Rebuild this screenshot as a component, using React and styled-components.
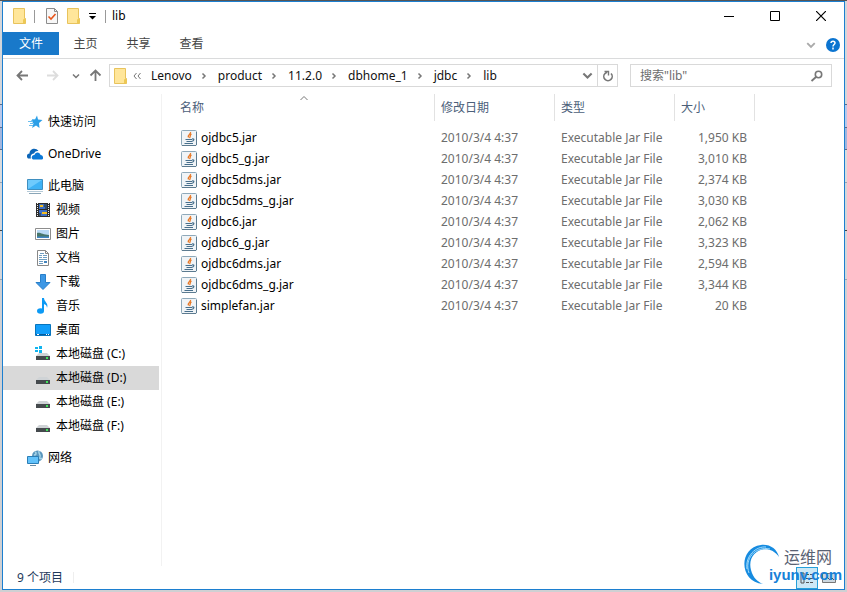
import React from 'react';
import styled, { createGlobalStyle, css } from 'styled-components';

const Global = createGlobalStyle`
  * { box-sizing: border-box; }
  body { margin: 0; }
  button, input { font: inherit; color: inherit; }
`;

const Desktop = styled.div`
  display: flex;
  min-height: 100vh;
  padding: 0 2px 2px;
  border-top: 1px solid #555;
  background: linear-gradient(#d4d6da 0 103px, #5c6b86 103px 104px, #b9c8ea 104px 126px, #5f6b86 126px 127px, #a2b6de 127px 148px, #5f6b86 148px 149px, #d9dbde 149px 181px, #9aa3b0 181px 182px, #d4d6da 182px 229px, #444 229px 230px, #d4d6da 230px 278px, #9aa3b0 278px 279px, #cfd0d3 279px);
  font-family: 'Noto Sans', 'Noto Sans CJK SC', sans-serif;
  font-size: 12px;
  line-height: 20px;
  color: #000;
`;

const Window = styled.main`
  position: relative;
  flex: 1;
  min-width: 0;
  display: flex;
  flex-direction: column;
  background: #fff;
  border: 1px solid #1c7fd0;
`;

const TitleBar = styled.header`
  display: flex;
  align-items: center;
  height: 30px;
  padding: 0 0 2px 9px;
`;

const IconButton = styled.button`
  display: flex;
  align-items: center;
  justify-content: center;
  flex: none;
  width: ${(p) => p.$w || 22}px;
  height: 22px;
  padding: 0;
  border: 0;
  background: none;
`;

const BarMark = styled.span`
  width: 1px;
  height: 13px;
  margin: 0 6px;
  background: #999;
`;

const Title = styled.h1`
  flex: 1;
  margin: 0;
  font-size: 12px;
  font-weight: 400;
`;

const WindowControls = styled.div`
  display: flex;
`;

const Ribbon = styled.nav`
  display: flex;
  align-items: flex-start;
  height: 27px;
  border-bottom: 1px solid #dadbdc;
`;

const RibbonTab = styled.button`
  width: ${(p) => (p.$primary ? 56 : 53)}px;
  height: 23px;
  padding: 1px 0 0;
  border: 0;
  background: ${(p) => (p.$primary ? '#1979ca' : 'none')};
  color: ${(p) => (p.$primary ? '#fff' : '#444')};
`;

const RibbonEnd = styled.div`
  display: flex;
  margin-left: auto;
  padding-top: 2px;
`;

const AddressRow = styled.div`
  display: flex;
  align-items: center;
  padding: 5px 12px 7px 7px;
`;

const AddressBar = styled.div`
  display: flex;
  align-items: center;
  flex: 1;
  min-width: 0;
  height: 23px;
  margin-right: 12px;
  padding-left: 3px;
  border: 1px solid #d9d9d9;
`;

const Crumbs = styled.ol`
  display: flex;
  align-items: center;
  flex: 1;
  margin: 0;
  padding: 0;
  list-style: none;
`;

const Crumb = styled.li`
  display: flex;
  align-items: center;
`;

const CrumbLink = styled.a`
  color: #111;
  text-decoration: none;
  padding: 0 5px 0 7px;
`;

const Refresh = styled(IconButton)`
  border-left: 1px solid #d9d9d9;
`;

const SearchBox = styled.label`
  display: flex;
  align-items: center;
  flex: none;
  width: 202px;
  height: 23px;
  padding: 0 5px 0 9px;
  border: 1px solid #d9d9d9;
`;

const SearchInput = styled.input`
  flex: 1;
  min-width: 0;
  padding: 0;
  border: 0;
  outline: 0;
  background: none;
  &::placeholder { color: #6d6d6d; opacity: 1; }
`;

const Content = styled.div`
  display: flex;
  flex: 1;
`;

const Sidebar = styled.nav`
  flex: none;
  width: 159px;
  padding: 16px 2px 0 0;
  border-right: 1px solid #f2f2f2;
`;

const TreeGroup = styled.ul`
  margin: 0 0 8px;
  padding: 0;
  list-style: none;
`;

const TreeLink = styled.a`
  display: flex;
  align-items: center;
  gap: 5px;
  height: 24px;
  padding-left: ${(p) => (p.$nested ? 32 : 24)}px;
  color: #000;
  text-decoration: none;
  background: ${(p) => (p.$selected ? '#d9d9d9' : 'none')};
`;

const Files = styled.section`
  flex: 1;
  min-width: 0;
`;

const FileTable = styled.table`
  width: 592px;
  table-layout: fixed;
  border-collapse: separate;
  border-spacing: 0;
`;

const Column = styled.col`
  width: ${(p) => p.$w}px;
`;

const HeadCell = styled.th`
  position: relative;
  height: 27px;
  padding: 0 0 0 ${(p) => (p.$first ? 18 : 6)}px;
  border-right: 1px solid #e2e2e2;
  color: #4c607a;
  font-weight: 400;
  text-align: left;
`;

const SortMark = styled.span`
  position: absolute;
  top: 0;
  left: 12px;
  right: 0;
  display: flex;
  justify-content: center;
`;

const SpacerCell = styled.td`
  height: 6px;
  padding: 0;
`;

const Cell = styled.td`
  height: 21px;
  padding: 0 8px 0 6px;
  color: #6d6d6d;
  white-space: nowrap;
  text-align: ${(p) => (p.$right ? 'right' : 'left')};
`;

const NameCell = styled(Cell)`
  padding-left: 19px;
  color: #000;
`;

const FileName = styled.span`
  display: flex;
  align-items: center;
  gap: 4px;
`;

const StatusBar = styled.footer`
  display: flex;
  align-items: center;
  height: 23px;
  padding-left: 14px;
  color: #1e395b;
`;

const StatusMark = styled.span`
  width: 1px;
  height: 11px;
  margin-left: 10px;
  background: #eee;
`;

const ViewButtons = styled.div`
  display: flex;
  margin-left: auto;
  padding-right: 4px;
`;

const ViewButton = styled(IconButton)`
  ${(p) => p.$active && css`
    border: 1px solid #26a0da;
    background: #cce8f6;
  `}
`;

const Watermark = styled.div`
  position: absolute;
  right: 2px;
  bottom: 3px;
  display: flex;
  pointer-events: none;
`;

const WatermarkText = styled.div`
  display: flex;
  flex-direction: column;
  align-items: flex-end;
  margin-left: -14px;
  padding-top: 4px;
`;

const WatermarkName = styled.span`
  padding-right: 10px;
  color: #596273;
  font-size: 16px;
  line-height: 19px;
`;

const WatermarkUrl = styled.strong`
  color: #1681d8;
  font: 700 15px/16px 'Liberation Sans', sans-serif;
`;

const Svg = ({ w = 16, h = 16, children }) => (
  <svg width={w} height={h} viewBox={`0 0 ${w} ${h}`} fill="none" aria-hidden="true">{children}</svg>
);

const Folder = () => (
  <Svg>
    <path d="M1.500 .5H12.500V10.500H13.500V15.500H1.500Z" fill="#ffe69a" stroke="#e8c35c" />
    <path d="M11 15V11.500L13.500 10.500V15.500Z" fill="#edc954" />
  </Svg>
);
const Check = () => (
  <Svg>
    <path d="M2.500 .5H10.500L13.500 3.500V15.500H2.500Z" fill="#f7f7f7" stroke="#8c8c8c" />
    <path d="M10.500 .5V3.500H13.500" stroke="#8c8c8c" />
    <path d="M4.500 8.500L7 11L11.500 6" stroke="#e8561c" strokeWidth="1.6" />
  </Svg>
);
const Chevron = ({ dir = 'down', color = '#777', size = 8, weight = 1.5 }) => {
  const d = { down: 'M1 2.500L4 5.500L7 2.500', right: 'M2.500 1.500L5 4L2.500 6.500', up: 'M0.500 6L4 2.500L7.500 6' }[dir];
  return <svg width={size} height={size} viewBox="0 0 8 8" fill="none" aria-hidden="true"><path d={d} stroke={color} strokeWidth={weight} /></svg>;
};
const Arrow = ({ dir, color = '#777' }) => {
  const d = { left: 'M12 6.500H1.500M6 2L1.500 6.500L6 11', right: 'M1 6.500H11.500M7 2L11.500 6.500L7 11', up: 'M6.500 12V2M1.500 6.500L6.500 1.500L11.500 6.500' }[dir];
  return <Svg w={13} h={13}><path d={d} stroke={color} strokeWidth="1.800" /></Svg>;
};
const Star = () => (
  <Svg>
    <path d="M10 1.500L11 5.500L15.500 6L12 9L12.500 14L9 11.500L5 14L6.500 9.500L4 6.500L8 5.500Z" fill="#2b9fe8" />
    <path d="M1 7.500H6M3 9.500H6M2 11.500H6M5 5.500H8" stroke="#69bff0" />
  </Svg>
);
const Cloud = () => (
  <Svg>
    <path d="M1 12.500C-1 10.500 0 7.500 2.500 7.500C2.500 3 8.500 1 11.500 5C9 4.500 7.500 6 7 7.500C4.500 7.500 3 10 4 12.500Z" fill="#0b65b8" />
    <path d="M6 13.500C3.500 12.500 5 8.500 7.500 9C8 5.500 13 5.500 13.500 9C16.500 9 17 13.500 14.500 13.500Z" fill="#0b78d6" />
  </Svg>
);
const Computer = () => (
  <Svg>
    <path d="M.5 1.500H15.500V11.500H.5Z" fill="#6fcafc" stroke="#3f8fc0" />
    <path d="M1 11L15 2V11Z" fill="#3fb2f5" />
    <path d="M0 13.500H16" stroke="#b6cbd8" />
    <path d="M2 15.500H14" stroke="#8aa6b8" />
  </Svg>
);
const Film = () => (
  <Svg>
    <path d="M1 1H15V15H1Z" fill="#2c2c2c" />
    <path d="M2.500 1V15M13.500 1V15" stroke="#eee" strokeDasharray="1 1" />
    <path d="M4 2H12V7H4ZM4 8H12V14H4Z" fill="#3c6fc4" />
    <path d="M5 3H8V5H5ZM7 10H12V12H7Z" fill="#f5bd22" />
    <path d="M9 2H12V7H10V5H9ZM4 11H6V14H4Z" fill="#344f6b" />
  </Svg>
);
const Picture = () => (
  <Svg>
    <path d="M.5 2.500H15.500V13.500H.5Z" fill="#fff" stroke="#8d8d8d" />
    <path d="M2 4H14V12H2Z" fill="#b9daf5" />
    <path d="M2 7C5 6 8 9 14 9V12H2Z" fill="#47766b" />
    <path d="M2 10.500H14V12H2Z" fill="#3f86c4" />
  </Svg>
);
const Document = () => (
  <Svg>
    <path d="M2.500 .5H10.500L13.500 3.500V15.500H2.500Z" fill="#fff" stroke="#888" />
    <path d="M10.500 .5V3.500H13.500" stroke="#888" />
    <path d="M5 3.500H9M4 5.500H7M8 5.500H12M4 7.500H7M8 7.500H12M4 9.500H12M4 11.500H8M4 13.500H8" stroke="#6f9ec2" />
    <path d="M9 11H12V13H9Z" fill="#4384bd" />
  </Svg>
);
const Download = () => (
  <Svg><path d="M5.500 .5H10.500V8.500H15L8 15.500L1 8.500H5.500Z" fill="#3c97e5" stroke="#287fc9" /></Svg>
);
const Music = () => (
  <Svg>
    <path d="M7 0H9C9 4 14 5 12 10C12 7 10 6.500 9 6V13H7Z" fill="#0c9af5" />
    <ellipse cx="5.500" cy="13" rx="3.500" ry="2.800" fill="#0c9af5" />
  </Svg>
);
const DesktopIcon = () => (
  <Svg>
    <path d="M.5 2.500H15.500V13.500H.5Z" fill="#129efa" stroke="#0875bd" />
    <path d="M1 12.500H15" stroke="#075b9c" />
    <path d="M2 12.500H4M11 12.500H12M13 12.500H14" stroke="#fff" />
  </Svg>
);
const Disk = ({ system }) => (
  <Svg>
    <path d="M4 7H12L15 10H1Z" fill="#cfd3d6" />
    <path d="M1 10H15V14H1Z" fill="#454a4d" />
    <path d="M11 12H13" stroke="#41e45b" strokeWidth="2" />
    {system && <path d="M0 1H3V3H0ZM4 0H7V3H4ZM0 4H3V6H0ZM4 4H7V7H4Z" fill="#10b4ef" />}
  </Svg>
);
const Network = () => (
  <Svg>
    <circle cx="10.500" cy="6" r="5.500" fill="#5a97be" />
    <path d="M8 2C10 3 9 5 7 5M12 1C11 4 14 4 13 7C12 9 14 9 15 8" stroke="#a5d3e8" strokeWidth="1.500" />
    <path d="M.5 6.500H11.500V13.500H.5Z" fill="#62c2fb" stroke="#2b7eb6" />
    <path d="M3 15.500H9" stroke="#698ba3" />
  </Svg>
);
const Jar = () => (
  <Svg>
    <rect x=".5" y=".5" width="15" height="15" rx="1" fill="#f0f4f7" stroke="#8ea9ba" />
    <path d="M1 15.500H15M15.500 2V15" stroke="#5c7b90" />
    <path d="M9.500 2C10.500 4 6 4.500 7.500 7.500M10.500 4C8.500 5 10 6 8.500 8" stroke="#e87927" strokeWidth="1.300" />
    <path d="M4.500 9.500H11M5.500 11.500H10.500M3.500 13.500H12M11 9C14 8.500 13 11 10.500 11.500" stroke="#476f8c" strokeWidth="1.200" />
  </Svg>
);

const crumbs = ['Lenovo', 'product', '11.2.0', 'dbhome_1', 'jdbc', 'lib'];

const tree = [
  [{ label: '快速访问', icon: <Star /> }],
  [{ label: 'OneDrive', icon: <Cloud /> }],
  [
    { label: '此电脑', icon: <Computer /> },
    { label: '视频', icon: <Film />, nested: true },
    { label: '图片', icon: <Picture />, nested: true },
    { label: '文档', icon: <Document />, nested: true },
    { label: '下载', icon: <Download />, nested: true },
    { label: '音乐', icon: <Music />, nested: true },
    { label: '桌面', icon: <DesktopIcon />, nested: true },
    { label: '本地磁盘 (C:)', icon: <Disk system />, nested: true },
    { label: '本地磁盘 (D:)', icon: <Disk />, nested: true, selected: true },
    { label: '本地磁盘 (E:)', icon: <Disk />, nested: true },
    { label: '本地磁盘 (F:)', icon: <Disk />, nested: true },
  ],
  [{ label: '网络', icon: <Network /> }],
];

const files = [
  ['ojdbc5.jar', '1,950 KB'],
  ['ojdbc5_g.jar', '3,010 KB'],
  ['ojdbc5dms.jar', '2,374 KB'],
  ['ojdbc5dms_g.jar', '3,030 KB'],
  ['ojdbc6.jar', '2,062 KB'],
  ['ojdbc6_g.jar', '3,323 KB'],
  ['ojdbc6dms.jar', '2,594 KB'],
  ['ojdbc6dms_g.jar', '3,344 KB'],
  ['simplefan.jar', '20 KB'],
];

export default function App() {
  return (
    <Desktop>
      <Global />
      <Window>
        <TitleBar>
          <IconButton $w={16} aria-label="窗口菜单"><Folder /></IconButton>
          <BarMark />
          <IconButton aria-label="属性"><Check /></IconButton>
          <IconButton aria-label="新建文件夹"><Folder /></IconButton>
          <IconButton $w={14} aria-label="自定义快速访问工具栏">
            <Svg w={7} h={7}><path d="M0 .5H7" stroke="#000" /><path d="M0 3H7L3.500 6.500Z" fill="#000" /></Svg>
          </IconButton>
          <BarMark />
          <Title>lib</Title>
          <WindowControls>
            <IconButton $w={46} aria-label="最小化"><Svg w={10} h={10}><path d="M0 5.500H10" stroke="#000" /></Svg></IconButton>
            <IconButton $w={46} aria-label="最大化"><Svg w={10} h={10}><path d="M.5 .5H9.500V9.500H.5Z" stroke="#000" /></Svg></IconButton>
            <IconButton $w={46} aria-label="关闭"><Svg w={10} h={10}><path d="M0 0L10 10M10 0L0 10" stroke="#000" strokeWidth="1.200" /></Svg></IconButton>
          </WindowControls>
        </TitleBar>
        <Ribbon>
          <RibbonTab $primary>文件</RibbonTab>
          <RibbonTab>主页</RibbonTab>
          <RibbonTab>共享</RibbonTab>
          <RibbonTab>查看</RibbonTab>
          <RibbonEnd>
            <IconButton aria-label="展开功能区"><Chevron color="#aaa" size={10} /></IconButton>
            <IconButton aria-label="帮助">
              <Svg w={14} h={14}>
                <circle cx="7" cy="7" r="7" fill="#0b74d0" />
                <path d="M5 5C5 2.500 9 2.500 9 5C9 6.500 7 6.500 7 8.500M7 9.500V11.500" stroke="#fff" strokeWidth="1.500" />
              </Svg>
            </IconButton>
          </RibbonEnd>
        </Ribbon>
        <AddressRow>
          <IconButton $w={24} aria-label="后退"><Arrow dir="left" /></IconButton>
          <IconButton $w={36} aria-label="前进"><Arrow dir="right" color="#ddd" /></IconButton>
          <IconButton $w={12} aria-label="最近浏览的位置"><Chevron /></IconButton>
          <IconButton $w={27} aria-label="上移"><Arrow dir="up" /></IconButton>
          <AddressBar>
            <Folder />
            <IconButton $w={15} aria-label="更多路径">
              <Svg w={8} h={8}><path d="M3.500 1L1 4L3.500 7M7.500 1L5 4L7.500 7" stroke="#777" /></Svg>
            </IconButton>
            <Crumbs>
              {crumbs.map((name, i) => (
                <Crumb key={name}>
                  <CrumbLink href="#">{name}</CrumbLink>
                  {i < crumbs.length - 1 && <IconButton $w={14} aria-label={name}><Chevron dir="right" /></IconButton>}
                </Crumb>
              ))}
            </Crumbs>
            <IconButton $w={20} aria-label="历史记录"><Chevron size={11} /></IconButton>
            <Refresh $w={20} aria-label="刷新">
              <Svg w={12} h={12}><path d="M9 3.500A4.200 4.200 0 1 1 3 3.500L5 2" stroke="#777" strokeWidth="1.600" /><path d="M2.500 1.500H6.500V5.500" stroke="#777" strokeWidth="1.400" /></Svg>
            </Refresh>
          </AddressBar>
          <SearchBox>
            <SearchInput type="search" aria-label="搜索" placeholder={'搜索"lib"'} />
            <Svg w={16} h={12}><circle cx="8.500" cy="4.500" r="3.200" stroke="#777" strokeWidth="1.600" /><path d="M6 7L1.500 11" stroke="#777" strokeWidth="1.800" /></Svg>
          </SearchBox>
        </AddressRow>
        <Content>
          <Sidebar>
            {tree.map((group) => (
              <TreeGroup key={group[0].label}>
                {group.map((item) => (
                  <li key={item.label}>
                    <TreeLink href="#" $nested={item.nested} $selected={item.selected}>{item.icon}{item.label}</TreeLink>
                  </li>
                ))}
              </TreeGroup>
            ))}
          </Sidebar>
          <Files>
            <FileTable>
              <colgroup><Column $w={273} /><Column $w={120} /><Column $w={120} /><Column $w={80} /></colgroup>
              <thead>
                <tr>
                  <HeadCell $first>名称<SortMark><Chevron dir="up" weight={1} /></SortMark></HeadCell>
                  <HeadCell>修改日期</HeadCell>
                  <HeadCell>类型</HeadCell>
                  <HeadCell>大小</HeadCell>
                </tr>
              </thead>
              <tbody>
                <tr><SpacerCell colSpan={4} /></tr>
                {files.map(([name, size]) => (
                  <tr key={name}>
                    <NameCell><FileName><Jar />{name}</FileName></NameCell>
                    <Cell>2010/3/4 4:37</Cell>
                    <Cell>Executable Jar File</Cell>
                    <Cell $right>{size}</Cell>
                  </tr>
                ))}
              </tbody>
            </FileTable>
          </Files>
        </Content>
        <StatusBar>
          9 个项目
          <StatusMark />
          <ViewButtons>
            <ViewButton $active aria-label="详细信息">
              <Svg><path d="M2 3H5V13H2ZM7 4.500H10M11 4.500H14M7 8.500H10M11 8.500H14M7 12.500H10M11 12.500H14" stroke="#555" /></Svg>
            </ViewButton>
            <ViewButton aria-label="大图标">
              <Svg><path d="M1.500 3.500H14.500V12.500H1.500Z" fill="#ccd7df" stroke="#777" /><path d="M3 10L6 7L9 10L11 8L13 10" stroke="#456" /></Svg>
            </ViewButton>
          </ViewButtons>
        </StatusBar>
        <Watermark>
          <Svg w={40} h={42}>
            <path d="M20 40C-4 38-5 4 18 1C27 0 34 5 36 13C25-3 3 8 8 26C10 34 15 38 20 40Z" fill="#168be0" />
            <path d="M6 29C1 15 12 2 27 5M4 25C2 12 13 2 23 3" stroke="#a3dcfb" />
          </Svg>
          <WatermarkText>
            <WatermarkName>运维网</WatermarkName>
            <WatermarkUrl>iyunv.com</WatermarkUrl>
          </WatermarkText>
        </Watermark>
      </Window>
    </Desktop>
  );
}
